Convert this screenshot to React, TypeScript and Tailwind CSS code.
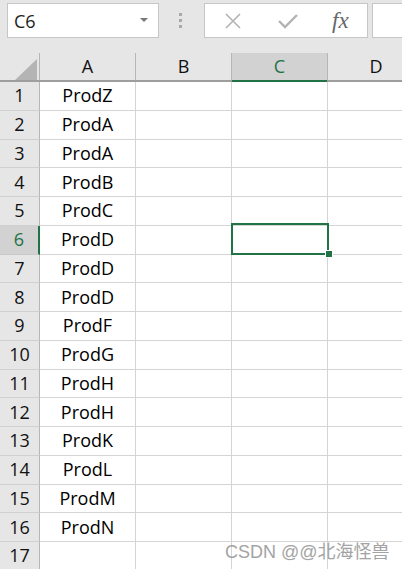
import React from "react";

const items = ["ProdZ","ProdA","ProdA","ProdB","ProdC","ProdD","ProdD","ProdD","ProdF","ProdG","ProdH","ProdH","ProdK","ProdL","ProdM","ProdN",""];

export default function App() {
  return (
    <div className="relative w-[402px] h-[569px] overflow-hidden bg-[#e6e6e6]" style={{ fontFamily: '"Open Sans", "Noto Sans", sans-serif' }}>
      {/* toolbar */}
      <div className="flex h-[53px] items-start pt-[3px]">
        <div className="shrink-0 ml-[7px] w-[152px] h-[35px] bg-white border border-[#c6c6c6] flex items-center justify-between pl-[6px] pr-[10px]">
          <span className="text-[18px] text-[#222] leading-none">C6</span>
          <svg width="8" height="5" viewBox="0 0 8 5"><path d="M0 0 H8 L4 4 Z" fill="#777" /></svg>
        </div>
        <div className="shrink-0 ml-[20px] mt-[10px] flex flex-col gap-[3px]">
          <div className="w-[3px] h-[3px] bg-[#a8a8a8]" />
          <div className="w-[3px] h-[3px] bg-[#a8a8a8]" />
          <div className="w-[3px] h-[3px] bg-[#a8a8a8]" />
        </div>
        <div className="shrink-0 ml-[22px] w-[164px] h-[35px] bg-white border border-[#c6c6c6] flex items-center">
          <svg className="ml-[19px]" width="18" height="18" viewBox="0 0 18 18"><path d="M2 2 L16 16 M16 2 L2 16" stroke="#b3b3b3" strokeWidth="1.6" /></svg>
          <svg className="ml-[36px]" width="20" height="16" viewBox="0 0 20 16"><path d="M1 8 L7 14 L19 2" stroke="#b3b3b3" strokeWidth="2.4" fill="none" /></svg>
          <span className="ml-[34px] text-[23px] italic text-[#666] leading-none" style={{ fontFamily: '"Liberation Serif", serif' }}>fx</span>
        </div>
        <div className="shrink-0 ml-[4px] w-[60px] h-[35px] bg-white border border-[#c6c6c6]" />
      </div>

      {/* header row */}
      <div className="flex h-[29px] border-b-2 border-[#9e9e9e] bg-[#e6e6e6] text-[18px] text-[#111]">
        <div className="relative w-[40px] shrink-0 border-r border-[#b6b6b6]">
          <svg className="absolute left-[15px] top-[6px]" width="22" height="21" viewBox="0 0 22 21"><path d="M22 0 L22 21 L0 21 Z" fill="#b4b4b4" /></svg>
        </div>
        <div className="w-[96px] shrink-0 border-r border-[#b6b6b6] flex items-center justify-center">A</div>
        <div className="w-[96px] shrink-0 border-r border-[#b6b6b6] flex items-center justify-center">B</div>
        <div className="w-[96px] shrink-0 border-r border-[#b6b6b6] bg-[#d2d2d2] flex items-center justify-center text-[#217346]">C</div>
        <div className="w-[96px] shrink-0 flex items-center justify-center">D</div>
      </div>
      <div className="absolute left-[232px] top-[80px] w-[95px] h-[2px] bg-[#217346]" />

      {/* rows */}
      <div className="bg-white">
        {items.map((t, i) => {
          const sel = i === 5;
          return (
            <div key={i} className="flex h-[28.75px]">
              <div className={`w-[40px] shrink-0 flex items-center justify-center text-[18px] border-b ${sel ? "bg-[#d2d2d2] text-[#217346] border-r-2 border-r-[#217346] border-b-[#c8c8c8]" : "bg-[#e6e6e6] text-[#111] border-r border-r-[#b6b6b6] border-b-[#d0d0d0]"}`}>{i + 1}</div>
              <div className="w-[96px] shrink-0 border-r border-b border-[#d4d4d4] flex items-center justify-center text-[18px] text-black">{t}</div>
              <div className="w-[96px] shrink-0 border-r border-b border-[#d4d4d4]" />
              <div className="w-[96px] shrink-0 border-r border-b border-[#d4d4d4]" />
              <div className="w-[96px] shrink-0 border-b border-[#d4d4d4]" />
            </div>
          );
        })}
      </div>

      {/* selection */}
      <div className="absolute left-[231px] top-[223px] w-[98px] h-[32px] border-2 border-[#217346]" />
      <div className="absolute left-[325px] top-[250px] w-[6px] h-[6px] bg-[#217346] border border-white box-content" />

      {/* watermark */}
      <div className="absolute left-[225px] top-[539px] text-[18px] text-[#9a9a9a] opacity-90" style={{ fontFamily: '"Liberation Sans", "Noto Sans CJK SC", sans-serif' }}>CSDN @@北海怪兽</div>
    </div>
  );
}
